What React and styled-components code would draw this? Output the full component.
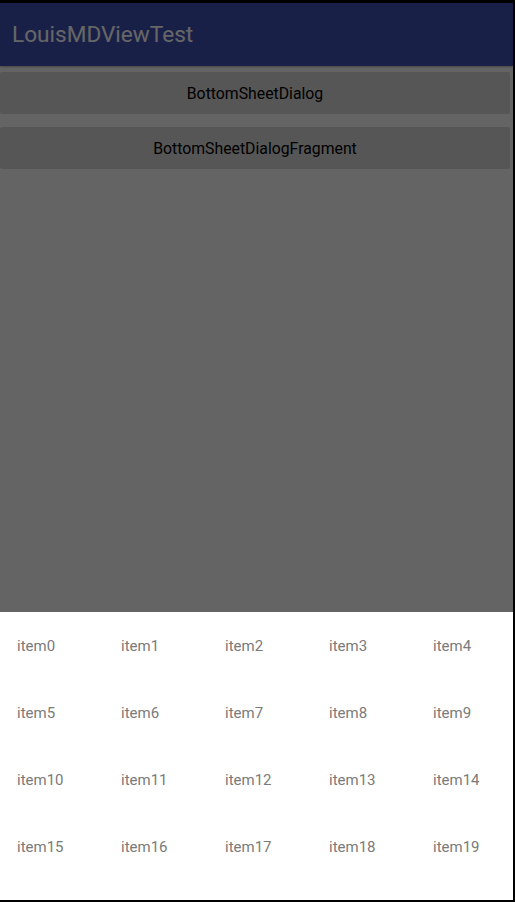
import React from "react"
import styled, { createGlobalStyle } from "styled-components"

const GlobalStyle = createGlobalStyle`
  html, body {
    margin: 0;
    padding: 0;
    background: #000;
  }
  body {
    font-family: Roboto, "Liberation Sans", sans-serif;
  }
`

const Frame = styled.div`
  width: 515px;
  height: 902px;
  box-sizing: border-box;
  padding: 3px 2px 2px 0;
  background: #000;
`

const Screen = styled.div`
  position: relative;
  display: flex;
  flex-direction: column;
  height: 100%;
  background: #fafafa;
  overflow: hidden;
`

const AppBar = styled.header`
  display: flex;
  align-items: center;
  flex-shrink: 0;
  height: 63px;
  padding-left: 12px;
  background: #3f51b5;
  box-shadow: 0 1px 2px rgba(0, 0, 0, 0.3);
`

const Title = styled.h1`
  margin: 0;
  font-size: 22.6px;
  font-weight: 400;
  color: #fff;
`

const Buttons = styled.div`
  display: flex;
  flex-direction: column;
  gap: 13px;
  padding: 6px 3px 0 0;
`

const Button = styled.button`
  height: 42px;
  border: none;
  border-radius: 2px;
  background: #d6d6d6;
  color: #000;
  font-family: inherit;
  font-size: 15.8px;
  padding: 0;
`

const Scrim = styled.div`
  position: absolute;
  inset: 0;
  background: rgba(0, 0, 0, 0.6);
`

const Sheet = styled.div`
  position: absolute;
  left: 0;
  right: 0;
  bottom: 0;
  height: 288px;
  background: #fff;
`

const Grid = styled.div`
  display: grid;
  grid-template-columns: repeat(5, 104px);
  grid-auto-rows: 67px;
`

const Item = styled.div`
  display: flex;
  align-items: center;
  padding-left: 17px;
  font-size: 15px;
  color: #7a7a7a;
`

const items = Array.from({ length: 20 }, (_, i) => `item${i}`)

const App = () => {
  return (
    <Frame>
      <GlobalStyle />
      <Screen>
        <AppBar>
          <Title>LouisMDViewTest</Title>
        </AppBar>
        <Buttons>
          <Button>BottomSheetDialog</Button>
          <Button>BottomSheetDialogFragment</Button>
        </Buttons>
        <Scrim />
        <Sheet>
          <Grid>
            {items.map(item => (
              <Item key={item}>{item}</Item>
            ))}
          </Grid>
        </Sheet>
      </Screen>
    </Frame>
  )
}

export default App
